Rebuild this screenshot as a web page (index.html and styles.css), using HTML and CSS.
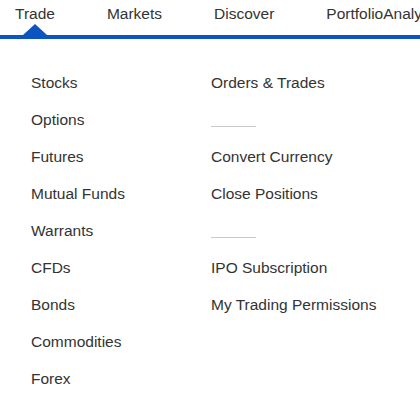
FILE: index.html
```html
<!DOCTYPE html>
<html lang="en">
<head>
<meta charset="utf-8">
<title>Trade menu</title>
<link rel="stylesheet" href="styles.css">
</head>
<body>
<nav class="topnav">
  <ul class="tabs">
    <li class="tab active">Trade</li>
    <li class="tab">Markets</li>
    <li class="tab">Discover</li>
    <li class="tab">PortfolioAnalysis</li>
  </ul>
</nav>
<div class="menu">
  <ul class="col">
    <li class="item">Stocks</li>
    <li class="item">Options</li>
    <li class="item">Futures</li>
    <li class="item">Mutual Funds</li>
    <li class="item">Warrants</li>
    <li class="item">CFDs</li>
    <li class="item">Bonds</li>
    <li class="item">Commodities</li>
    <li class="item">Forex</li>
  </ul>
  <ul class="col">
    <li class="item">Orders &amp; Trades</li>
    <li class="sep"><span class="sep-line"></span></li>
    <li class="item">Convert Currency</li>
    <li class="item">Close Positions</li>
    <li class="sep"><span class="sep-line"></span></li>
    <li class="item">IPO Subscription</li>
    <li class="item">My Trading Permissions</li>
  </ul>
</div>
</body>
</html>
```
FILE: styles.css
```css
* { box-sizing: border-box; }
html, body {
  margin: 0;
  padding: 0;
  background: #ffffff;
  overflow: hidden;
}
body {
  font-family: "Liberation Sans", Arial, sans-serif;
  font-size: 15.5px;
  color: #333333;
  width: 420px;
}
ul { list-style: none; margin: 0; padding: 0; }

.topnav {
  height: 39px;
  border-bottom: 4px solid #0c55c0;
  overflow: hidden;
}
.tabs {
  display: flex;
  gap: 52px;
  padding-left: 15px;
  white-space: nowrap;
}
.tab {
  position: relative;
  height: 35px;
  line-height: 27px;
  flex: none;
}
.tab.active::after {
  content: "";
  position: absolute;
  left: 50%;
  bottom: 0;
  margin-left: -12px;
  width: 0;
  height: 0;
  border-left: 12px solid transparent;
  border-right: 12px solid transparent;
  border-bottom: 11px solid #0c55c0;
}

.menu {
  display: grid;
  grid-template-columns: 180px auto;
  padding: 25px 0 0 31px;
}
.item {
  height: 37px;
  line-height: 37px;
  white-space: nowrap;
}
.sep {
  height: 37px;
  padding-top: 25px;
}
.sep-line {
  display: block;
  width: 45px;
  height: 1px;
  background: #c9c9c9;
}
```
